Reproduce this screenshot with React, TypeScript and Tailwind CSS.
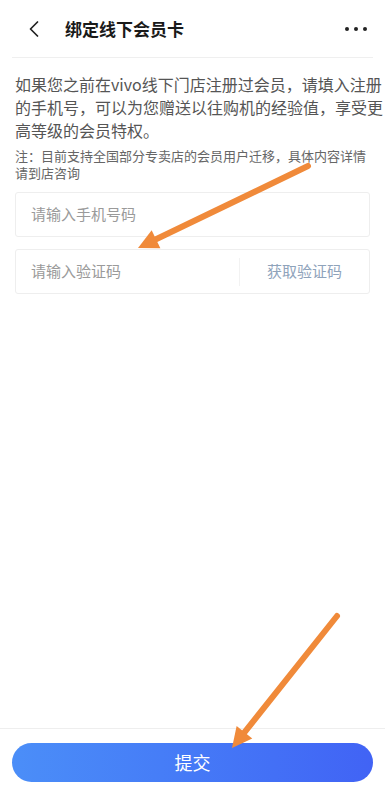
import { ChevronLeft } from 'lucide-react';

const FONT = '"Noto Sans CJK SC", "Noto Sans", sans-serif';

function Arrow({ x1, y1, x2, y2 }: { x1: number; y1: number; x2: number; y2: number }) {
  const dx = x2 - x1;
  const dy = y2 - y1;
  const len = Math.hypot(dx, dy);
  const ux = dx / len;
  const uy = dy / len;
  const headLen = 20;
  const headW = 10;
  const bx = x2 - ux * headLen;
  const by = y2 - uy * headLen;
  const p1 = `${bx - uy * headW},${by + ux * headW}`;
  const p2 = `${bx + uy * headW},${by - ux * headW}`;
  return (
    <g>
      <line x1={x1} y1={y1} x2={bx} y2={by} stroke="#f08a3a" strokeWidth="6" strokeLinecap="round" />
      <polygon points={`${x2},${y2} ${p1} ${p2}`} fill="#f08a3a" />
    </g>
  );
}

export default function App() {
  return (
    <div className="relative flex h-[797px] w-[385px] flex-col overflow-hidden bg-white" style={{ fontFamily: FONT }}>
      {/* header */}
      <header className="mx-3 flex h-[58px] shrink-0 items-center border-b border-[#efefef]">
        <ChevronLeft className="ml-[8px] h-7 w-7 text-[#222]" strokeWidth={1.5} />
        <h1 className="ml-[17px] text-[17px] font-bold text-[#1a1a1a]">绑定线下会员卡</h1>
        <div className="ml-auto mr-[6px] flex items-center gap-[5px]">
          <span className="h-[4px] w-[4px] rounded-full bg-[#222]" />
          <span className="h-[4px] w-[4px] rounded-full bg-[#222]" />
          <span className="h-[4px] w-[4px] rounded-full bg-[#222]" />
        </div>
      </header>

      <main className="flex flex-col px-[15px]">
        <p className="mt-[15px] flex flex-col whitespace-nowrap text-[16px] leading-[23px] text-[#555]">
          <span>如果您之前在vivo线下门店注册过会员，请填入注册</span>
          <span>的手机号，可以为您赠送以往购机的经验值，享受更</span>
          <span>高等级的会员特权。</span>
        </p>
        <p className="mt-[5px] text-[13px] leading-[17px] text-[#666]">
          注：目前支持全国部分专卖店的会员用户迁移，具体内容详情请到店咨询
        </p>

        <div className="mt-[11px] flex h-[45px] items-center rounded-[3px] border border-[#eeeeee] px-[15px]">
          <span className="text-[15px] text-[#9a9a9a]">请输入手机号码</span>
        </div>

        <div className="mt-[12px] flex h-[45px] items-center rounded-[3px] border border-[#eeeeee]">
          <span className="flex-1 px-[15px] text-[15px] text-[#9a9a9a]">请输入验证码</span>
          <div className="h-[28px] w-px bg-[#f2f2f2]" />
          <span className="w-[129px] text-center text-[15px] text-[#8fa3bb]">获取验证码</span>
        </div>
      </main>

      <div className="flex-1" />

      <footer className="shrink-0 border-t border-[#eeeeee] px-[12px] pt-[14px] pb-[15px]">
        <button className="flex h-[39px] w-full items-center justify-center rounded-full bg-gradient-to-r from-[#4b8ef8] to-[#4163f5] text-[18px] text-white">
          提交
        </button>
      </footer>

      <svg className="pointer-events-none absolute inset-0" width="385" height="797" viewBox="0 0 385 797">
        <Arrow x1={308} y1={166} x2={138} y2={248} />
        <Arrow x1={337} y1={616} x2={232} y2={748} />
      </svg>
    </div>
  );
}
